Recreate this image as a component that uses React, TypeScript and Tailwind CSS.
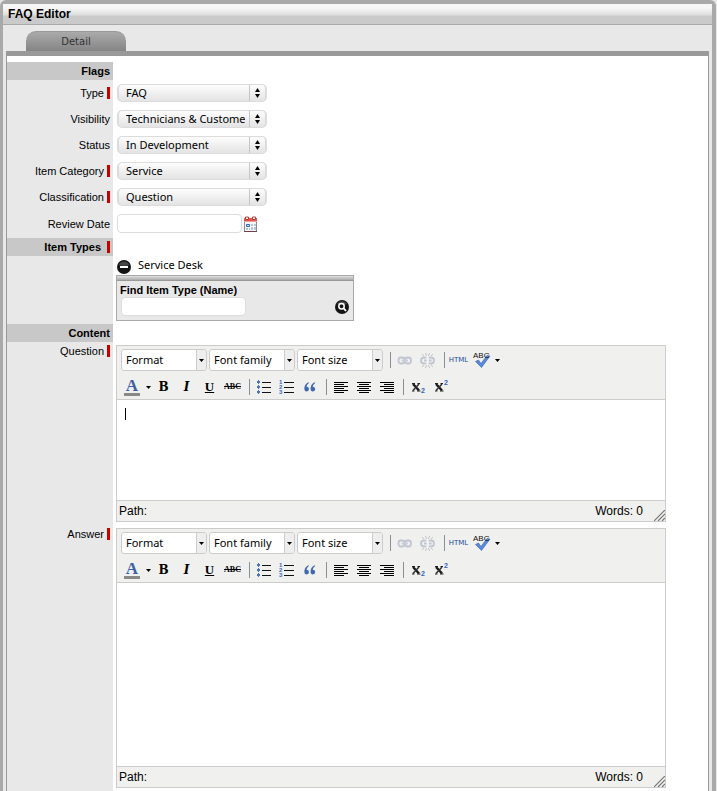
import React from 'react';

interface FieldRowProps {
  label: string;
  htmlFor?: string;
  required?: boolean;
  className?: string;
  labelClass?: string;
  children?: React.ReactNode;
}

const RequiredMark = () => <span className="ml-[3px] h-3 w-[3px] shrink-0 bg-[#c80000]" />;

const SectionRow: React.FC<{ title: string; required?: boolean }> = ({ title, required }) => (
  <div className="flex h-[18px]">
    <h2 className="flex w-[106px] items-center justify-end bg-[#c8c8c8] pr-[3px] text-[11px] leading-3 font-bold">
      {title}
      {required && <span className="w-[3px]" />}
      {required && <RequiredMark />}
    </h2>
  </div>
);

const FieldRow: React.FC<FieldRowProps> = ({ label, htmlFor, required, className = 'h-[26px]', labelClass = 'pt-[7px]', children }) => (
  <div className={`flex ${className}`}>
    <div className={`w-[106px] shrink-0 bg-[#e8e8e8] pr-[3px] ${labelClass}`}>
      <label htmlFor={htmlFor} className="flex h-3 items-center justify-end text-[11px] leading-3">
        {label}
        {required && <RequiredMark />}
      </label>
    </div>
    {children}
  </div>
);

const PopupSelect: React.FC<{ id: string; value: string }> = ({ id, value }) => (
  <div className="relative mt-1 ml-1 h-[18px] w-[150px]">
    <select
      id={id}
      defaultValue={value}
      className="block h-[18px] w-full appearance-none overflow-hidden rounded-[5px] border border-x-2 border-[#dcdcdc] bg-linear-to-b from-[#fdfdfd] via-[#f0f0f0] to-[#e4e4e4] pr-5 pl-[7px] font-['Noto_Sans',sans-serif] text-[11px] leading-4"
    >
      <option>{value}</option>
    </select>
    <svg className="pointer-events-none absolute top-0 right-0 h-[18px] w-[18px]" viewBox="0 0 18 18">
      <path d="M0.5 1V17" stroke="#c6c6c6" />
      <path d="M8.500 4L11 8H6zM8.500 14L6 10H11z" fill="#000" />
    </svg>
  </div>
);

const CalendarIcon = () => (
  <svg width="16" height="17" viewBox="0 0 16 17">
    <path d="M1.500 3.500h12v12h-12z" fill="#f4f7fb" stroke="#8a8fa0" />
    <path d="M1 2h13v4H1z" fill="#e2544a" />
    <path d="M1 5.500h13" stroke="#f09a92" />
    <path d="M2.500 1h3v2.500h-3zM9.500 1h3v2.500h-3z" fill="#fff" stroke="#c23a32" />
    <path d="M1 15.500h13" stroke="#704048" />
    <path d="M3.500 8.500h3v2h-3z" fill="#cfe0fa" stroke="#3565c8" />
    <path d="M8 8h2v2H8zM11 8h2v2h-2zM3 12h2v2H3zM6 12h1v2H6zM8 11h2v3H8zM11 11h2v3h-2z" fill="#b6c5d8" />
  </svg>
);

const RemoveIcon = () => (
  <svg width="14" height="14" viewBox="0 0 14 14">
    <circle cx="7" cy="7" r="7" fill="#141414" />
    <path d="M1.500 5a6 6 0 0 1 11 0q-5.500 2-11 0" fill="#444" />
    <path d="M3 6h8v2H3z" fill="#fff" />
  </svg>
);

const SearchIcon = () => (
  <svg width="14" height="14" viewBox="0 0 14 14">
    <circle cx="7" cy="7" r="7" fill="#141414" />
    <path d="M2 4a6 6 0 0 1 10 0q-5 2-10 0" fill="#4a4a4a" />
    <circle cx="6.500" cy="6.300" r="2.700" fill="none" stroke="#fff" strokeWidth="1.500" />
    <path d="M8.400 8.200L11 11" stroke="#fff" strokeWidth="1.800" />
  </svg>
);

const LinkIcon = () => (
  <svg width="16" height="16" viewBox="0 0 16 16" fill="none" stroke="#c0c5d2" strokeWidth="1.800">
    <rect x="1.500" y="5.500" width="6" height="6" rx="2.500" />
    <rect x="8" y="5.500" width="6" height="6" rx="2.500" />
    <path d="M4.500 8.500h6.500" stroke="#c9cedb" />
  </svg>
);

const UnlinkIcon = () => (
  <svg width="16" height="16" viewBox="0 0 16 16" fill="none" stroke="#c0c5d2" strokeWidth="1.800">
    <path d="M6 6Q5.500 5.500 4 5.500a3 3 0 0 0 0 6q1.500 0 2-.5M9 6q.5-.5 2-.5a3 3 0 0 1 0 6q-1.500 0-2-.5" />
    <path d="M4 8.500h2.500M9 8.500h2.500" />
    <path d="M6.500 4L5.500 1M8.500 4L9.500 1M11 4l2-2M4 4L2 2M6.500 13L5.500 16M8.500 13l1 3M11 13l2 2M4 13L2 15" stroke="#c4c4c4" strokeWidth="1" />
  </svg>
);

const SpellIcon = () => (
  <svg width="18" height="18" viewBox="0 0 18 18">
    <path d="M2.500 10.500L5.500 9l2.500 3.500L14 4.500l3 .5L8.500 16.500z" fill="#5a8ade" stroke="#3560ae" strokeWidth=".6" />
    <text x="0" y="7" fontFamily="Liberation Sans" fontSize="8" fill="#111">ABC</text>
  </svg>
);

const BulletListIcon = () => (
  <svg width="14" height="14" viewBox="0 0 14 14">
    <path d="M0 1h3v2H0zM0 6h3v2H0zM0 11h3v2H0z" fill="#4d74bd" />
    <path d="M1 0h1v4H1zM1 5h1v4H1zM1 10h1v4H1z" fill="#4d74bd" />
    <path d="M5 2.500h9M5 7.500h9M5 12.500h9" stroke="#111" />
  </svg>
);

const NumberListIcon = () => (
  <svg width="16" height="16" viewBox="0 0 16 16">
    <g fontFamily="Liberation Sans" fontSize="6" fontWeight="bold" fill="#3f68b4">
      <text x="0" y="5">1</text>
      <text x="0" y="10">2</text>
      <text x="0" y="15">3</text>
    </g>
    <path d="M5 3.500h10M5 8.500h10M5 13.500h10" stroke="#111" />
  </svg>
);

const QuoteIcon = () => (
  <svg width="12" height="10" viewBox="0 0 12 10" fill="#4169ad">
    <path d="M4.800.2Q1 1.500.4 5.500 0 9.500 2.700 9.500 5 9.300 5 6.900 4.800 4.700 2.500 4.800 2.700 2.300 4.900.9z" />
    <path d="M11 .2Q7.200 1.500 6.600 5.500 6.200 9.500 8.900 9.500q2.300-.2 2.300-2.600-.2-2.200-2.500-2.100Q8.900 2.300 11.100.9z" />
  </svg>
);

const alignPaths = {
  left: 'M0 .5h14M0 2.500h10M0 4.500h14M0 6.500h10M0 8.500h14M0 10.500h10',
  center: 'M0 .5h14M2 2.500h10M0 4.500h14M2 6.500h10M0 8.500h14M2 10.500h10',
  right: 'M0 .5h14M4 2.500h10M0 4.500h14M4 6.500h10M0 8.500h14M4 10.500h10',
};

const AlignIcon: React.FC<{ side: keyof typeof alignPaths }> = ({ side }) => (
  <svg width="14" height="11" viewBox="0 0 14 11">
    <path d={alignPaths[side]} stroke="#000" />
  </svg>
);

const ScriptIcon: React.FC<{ up?: boolean }> = ({ up }) => (
  <svg width="16" height="16" viewBox="0 0 16 16">
    <path d="M3 5L9 11.500" stroke="#1a1a1a" strokeWidth="2.400" />
    <path d="M9 5L3 11.500" stroke="#333" strokeWidth="1.500" />
    <path d="M2 4.500h3M7.500 4.500H10M2 12H4.500M7 12h3.500" stroke="#222" />
    <text x="11" y={up ? 6 : 14} fontFamily="Liberation Sans" fontSize="7" fontWeight="bold" fill="#2f62c4">2</text>
  </svg>
);

const FontColorIcon = () => (
  <svg width="17" height="20" viewBox="0 0 17 20">
    <text x="8" y="14" textAnchor="middle" fontFamily="Liberation Serif" fontSize="17" fontWeight="bold" fill="#3c60a4">A</text>
    <path d="M0 16h16v3H0z" fill="#888" />
  </svg>
);

const DownArrow = () => (
  <svg width="5" height="3" viewBox="0 0 5 3" className="shrink-0">
    <path d="M0 0h5L2.500 3z" fill="#000" />
  </svg>
);

const ToolButton: React.FC<{ label: string; children: React.ReactNode }> = ({ label, children }) => (
  <button type="button" aria-label={label} className="flex h-[22px] w-[23px] shrink-0 items-center justify-center">
    {children}
  </button>
);

const SplitArrow: React.FC<{ label: string }> = ({ label }) => (
  <button type="button" aria-label={label} className="flex h-[22px] w-2 shrink-0 items-center justify-center">
    <DownArrow />
  </button>
);

const Separator = () => (
  <span className="flex w-2 shrink-0 justify-end pr-[2px]">
    <span className="h-4 w-px bg-[#8a8f98]" />
  </span>
);

const ToolSelect: React.FC<{ label: string }> = ({ label }) => (
  <div className="relative mr-[2px] h-[22px] w-[86px] shrink-0">
    <select
      aria-label={label}
      defaultValue={label}
      className="block h-[22px] w-full appearance-none rounded-[3px] border border-[#ccc] bg-white pr-3 pl-1 font-['Noto_Sans',sans-serif] text-[11px] leading-4"
    >
      <option>{label}</option>
    </select>
    <span className="pointer-events-none absolute top-px right-px flex h-5 w-[10px] items-center justify-center rounded-r-[2px] border-l border-[#ccc] bg-[#eee]">
      <DownArrow />
    </span>
  </div>
);

const RichEditor: React.FC<{ id: string; bodyClass: string; focused?: boolean }> = ({ id, bodyClass, focused }) => (
  <div className="mt-[3px] mr-[42px] ml-[3px] min-w-0 flex-1 self-start border border-[#ccc] bg-[#f0f0ee]">
    <div className="h-[54px] border-b border-[#ccc] pt-[3px] pl-1">
      <div className="flex h-[22px] items-center">
        <ToolSelect label="Format" />
        <ToolSelect label="Font family" />
        <ToolSelect label="Font size" />
        <Separator />
        <ToolButton label="Insert link"><LinkIcon /></ToolButton>
        <ToolButton label="Remove link"><UnlinkIcon /></ToolButton>
        <Separator />
        <ToolButton label="Edit HTML source">
          <span className="font-['DejaVu_Sans',sans-serif] text-[7px] leading-3 text-[#1c4a9c]">HTML</span>
        </ToolButton>
        <ToolButton label="Check spelling"><SpellIcon /></ToolButton>
        <SplitArrow label="Spelling options" />
      </div>
      <div className="mt-1 flex h-6 items-center">
        <ToolButton label="Text color"><FontColorIcon /></ToolButton>
        <SplitArrow label="Choose text color" />
        <ToolButton label="Bold">
          <span className="font-['DejaVu_Serif',serif] text-[12px] leading-4 font-bold">B</span>
        </ToolButton>
        <ToolButton label="Italic">
          <span className="font-['DejaVu_Serif',serif] text-[12px] leading-4 font-bold italic">I</span>
        </ToolButton>
        <ToolButton label="Underline">
          <span className="font-['Liberation_Serif',serif] text-[13px] leading-4 font-bold underline">U</span>
        </ToolButton>
        <ToolButton label="Strikethrough">
          <span className="font-['Liberation_Serif',serif] text-[8px] leading-3 font-bold line-through">ABC</span>
        </ToolButton>
        <Separator />
        <ToolButton label="Bullet list"><BulletListIcon /></ToolButton>
        <ToolButton label="Numbered list"><NumberListIcon /></ToolButton>
        <ToolButton label="Blockquote"><QuoteIcon /></ToolButton>
        <Separator />
        <ToolButton label="Align left"><AlignIcon side="left" /></ToolButton>
        <ToolButton label="Align center"><AlignIcon side="center" /></ToolButton>
        <ToolButton label="Align right"><AlignIcon side="right" /></ToolButton>
        <Separator />
        <ToolButton label="Subscript"><ScriptIcon /></ToolButton>
        <ToolButton label="Superscript"><ScriptIcon up /></ToolButton>
      </div>
    </div>
    <div className="relative">
      <textarea id={id} className={`block w-full resize-none bg-white p-2 text-[12px] outline-none ${bodyClass}`} />
      {focused && <span className="absolute top-2 left-2 h-3 w-px bg-black" />}
    </div>
    <div className="relative flex h-[21px] items-center justify-between border-t border-[#ccc] pr-[22px] pl-[2px] text-[12px] leading-4">
      <span>Path:</span>
      <span>Words: 0</span>
      <svg className="absolute right-0 bottom-0" width="11" height="11" viewBox="0 0 11 11">
        <path d="M0 11L11 0M4 11L11 4M8 11L11 8" stroke="#777" strokeWidth="1.200" />
      </svg>
    </div>
  </div>
);

const App: React.FC = () => {
  return (
    <div className="min-h-screen bg-[#e8e8e8] pr-px font-['Liberation_Sans',Arial,sans-serif] text-black">
      <div className="flex min-h-screen flex-col rounded-t-[6px] border-x-4 border-t-4 border-l-3 border-[#a9a9a9] bg-[#e8e8e8]">
        <header className="flex h-[21px] items-center border-b border-[#a9a9a9] bg-linear-to-b from-[#f6f6f6] from-20% via-[#dedede] via-55% to-[#cacaca] to-60% pl-[5px]">
          <h1 className="text-[12px] leading-4 font-bold">FAQ Editor</h1>
        </header>
        <nav className="pt-[6px] pl-[23px]">
          <button type="button" className="block h-5 w-[100px] rounded-t-[10px] border-t border-[#999] bg-linear-to-b from-[#aaa] to-[#858585] text-center font-['DejaVu_Sans',sans-serif] text-[10px] leading-5 text-[#333]">
            Detail
          </button>
        </nav>
        <main className="mx-[3px] flex flex-1 flex-col border-x border-t-5 border-[#999] bg-white pt-[6px]">
          <SectionRow title="Flags" />
          <FieldRow label="Type" htmlFor="type" required>
            <PopupSelect id="type" value="FAQ" />
          </FieldRow>
          <FieldRow label="Visibility" htmlFor="visibility">
            <PopupSelect id="visibility" value="Technicians & Customers" />
          </FieldRow>
          <FieldRow label="Status" htmlFor="status">
            <PopupSelect id="status" value="In Development" />
          </FieldRow>
          <FieldRow label="Item Category" htmlFor="category" required>
            <PopupSelect id="category" value="Service" />
          </FieldRow>
          <FieldRow label="Classification" htmlFor="classification" required>
            <PopupSelect id="classification" value="Question" />
          </FieldRow>
          <FieldRow label="Review Date" htmlFor="review-date" className="h-7" labelClass="pt-2">
            <input id="review-date" type="text" className="mt-1 ml-1 h-[19px] w-[125px] rounded-[4px] border border-[#ddd] bg-white px-1 text-[11px]" />
            <button type="button" aria-label="Pick a date" className="mt-[6px] ml-[1px] h-[17px]">
              <CalendarIcon />
            </button>
          </FieldRow>
          <SectionRow title="Item Types" required />
          <div className="flex h-[68px]">
            <div className="w-[106px] shrink-0 bg-[#e8e8e8]" />
            <div className="pt-[2px] pl-[3px]">
              <div className="flex h-[17px] items-start pl-px">
                <button type="button" aria-label="Remove Service Desk" className="mt-[2px]"><RemoveIcon /></button>
                <span className="ml-[7px] font-['Noto_Sans',sans-serif] text-[11px] leading-[14px]">Service Desk</span>
              </div>
              <div className="h-[46px] w-[238px] border border-[#a9a9a9] bg-[#e8e8e8]">
                <div className="h-[5px] border-b border-[#999] bg-linear-to-b from-[#e0e0e0] to-[#aaa]" />
                <label htmlFor="find-item" className="block pt-[2px] pl-[3px] text-[11px] leading-[14px] font-bold">
                  Find Item Type (Name)
                </label>
                <div className="flex items-center justify-between pr-1 pl-1">
                  <input id="find-item" type="text" className="h-[19px] w-[125px] rounded-[4px] border border-[#ddd] bg-white px-1 text-[11px]" />
                  <button type="button" aria-label="Search"><SearchIcon /></button>
                </div>
              </div>
            </div>
          </div>
          <SectionRow title="Content" />
          <FieldRow label="Question" htmlFor="question" required className="h-[183px]" labelClass="pt-[3px]">
            <RichEditor id="question" bodyClass="h-[100px]" focused />
          </FieldRow>
          <FieldRow label="Answer" htmlFor="answer" required className="flex-1" labelClass="pt-[3px]">
            <RichEditor id="answer" bodyClass="h-[183px]" />
          </FieldRow>
        </main>
      </div>
    </div>
  );
};

export default App;
